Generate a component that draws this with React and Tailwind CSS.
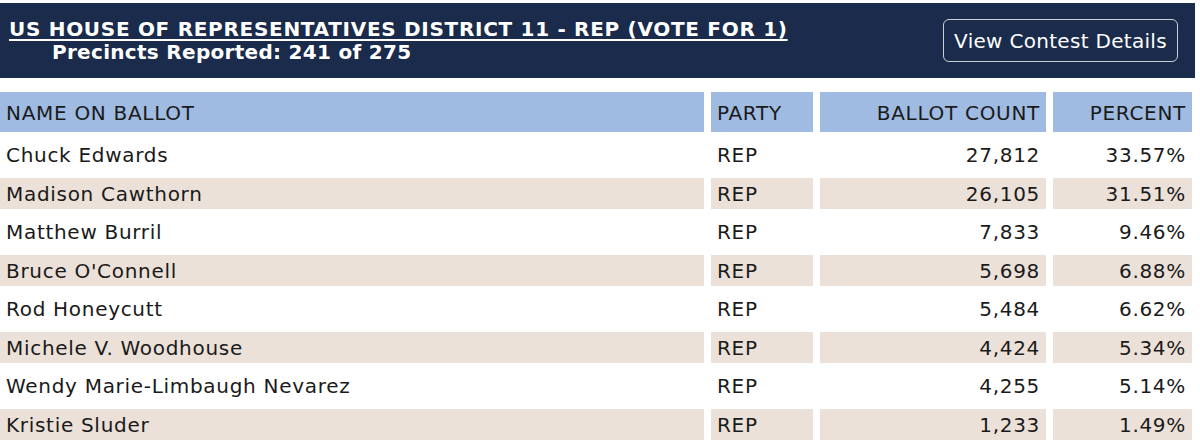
const rows = [
  ['Chuck Edwards', 'REP', '27,812', '33.57%'],
  ['Madison Cawthorn', 'REP', '26,105', '31.51%'],
  ['Matthew Burril', 'REP', '7,833', '9.46%'],
  ["Bruce O'Connell", 'REP', '5,698', '6.88%'],
  ['Rod Honeycutt', 'REP', '5,484', '6.62%'],
  ['Michele V. Woodhouse', 'REP', '4,424', '5.34%'],
  ['Wendy Marie-Limbaugh Nevarez', 'REP', '4,255', '5.14%'],
  ['Kristie Sluder', 'REP', '1,233', '1.49%'],
]

export default function App() {
  return (
    <main className="w-[1200px] h-[445px] bg-white overflow-hidden text-[#1a1a1a]" style={{ fontFamily: '"DejaVu Sans", Verdana, sans-serif' }}>
      {/* Contest header */}
      <div className="mt-[3px] w-[1195px] h-[75px] bg-[#1a2b4b] flex items-start justify-between">
        <div className="pl-[9px] pt-[15px] text-white font-bold text-[20px] leading-[23px]">
          <div className="underline decoration-[1.5px] underline-offset-[3px] tracking-[0.7px]">US HOUSE OF REPRESENTATIVES DISTRICT 11 - REP (VOTE FOR 1)</div>
          <div className="pl-[43px] tracking-[0.3px]">Precincts Reported: 241 of 275</div>
        </div>
        <button className="mt-[16px] mr-[17px] w-[235px] h-[43px] rounded-[6px] border border-[#c9ced8] text-white text-[20px] tracking-[0.3px]">
          View Contest Details
        </button>
      </div>

      {/* Results table */}
      <div className="mt-[14px] w-[1192px] grid grid-cols-[704px_102px_226px_139px] gap-[7px] text-[20px] tracking-[0.7px]">
        <div className="h-[40px] bg-[#a0bbe1] pl-[6px] pt-[2px] flex items-center">NAME ON BALLOT</div>
        <div className="h-[40px] bg-[#a0bbe1] pl-[6px] pt-[2px] flex items-center">PARTY</div>
        <div className="h-[40px] bg-[#a0bbe1] pr-[6px] pt-[2px] flex items-center justify-end">BALLOT COUNT</div>
        <div className="h-[40px] bg-[#a0bbe1] pr-[6px] pt-[2px] flex items-center justify-end">PERCENT</div>
        {rows.map((r, i) => {
          const bg = i % 2 === 1 ? 'bg-[#ebe1d8]' : 'bg-white'
          return [
            <div key={i + 'n'} className={`h-[31.5px] ${bg} pl-[6px] pt-[1px] flex items-center`}>{r[0]}</div>,
            <div key={i + 'p'} className={`h-[31.5px] ${bg} pl-[6px] pt-[1px] flex items-center`}>{r[1]}</div>,
            <div key={i + 'c'} className={`h-[31.5px] ${bg} pr-[6px] pt-[1px] flex items-center justify-end`}>{r[2]}</div>,
            <div key={i + 'r'} className={`h-[31.5px] ${bg} pr-[6px] pt-[1px] flex items-center justify-end`}>{r[3]}</div>,
          ]
        })}
      </div>
    </main>
  )
}
